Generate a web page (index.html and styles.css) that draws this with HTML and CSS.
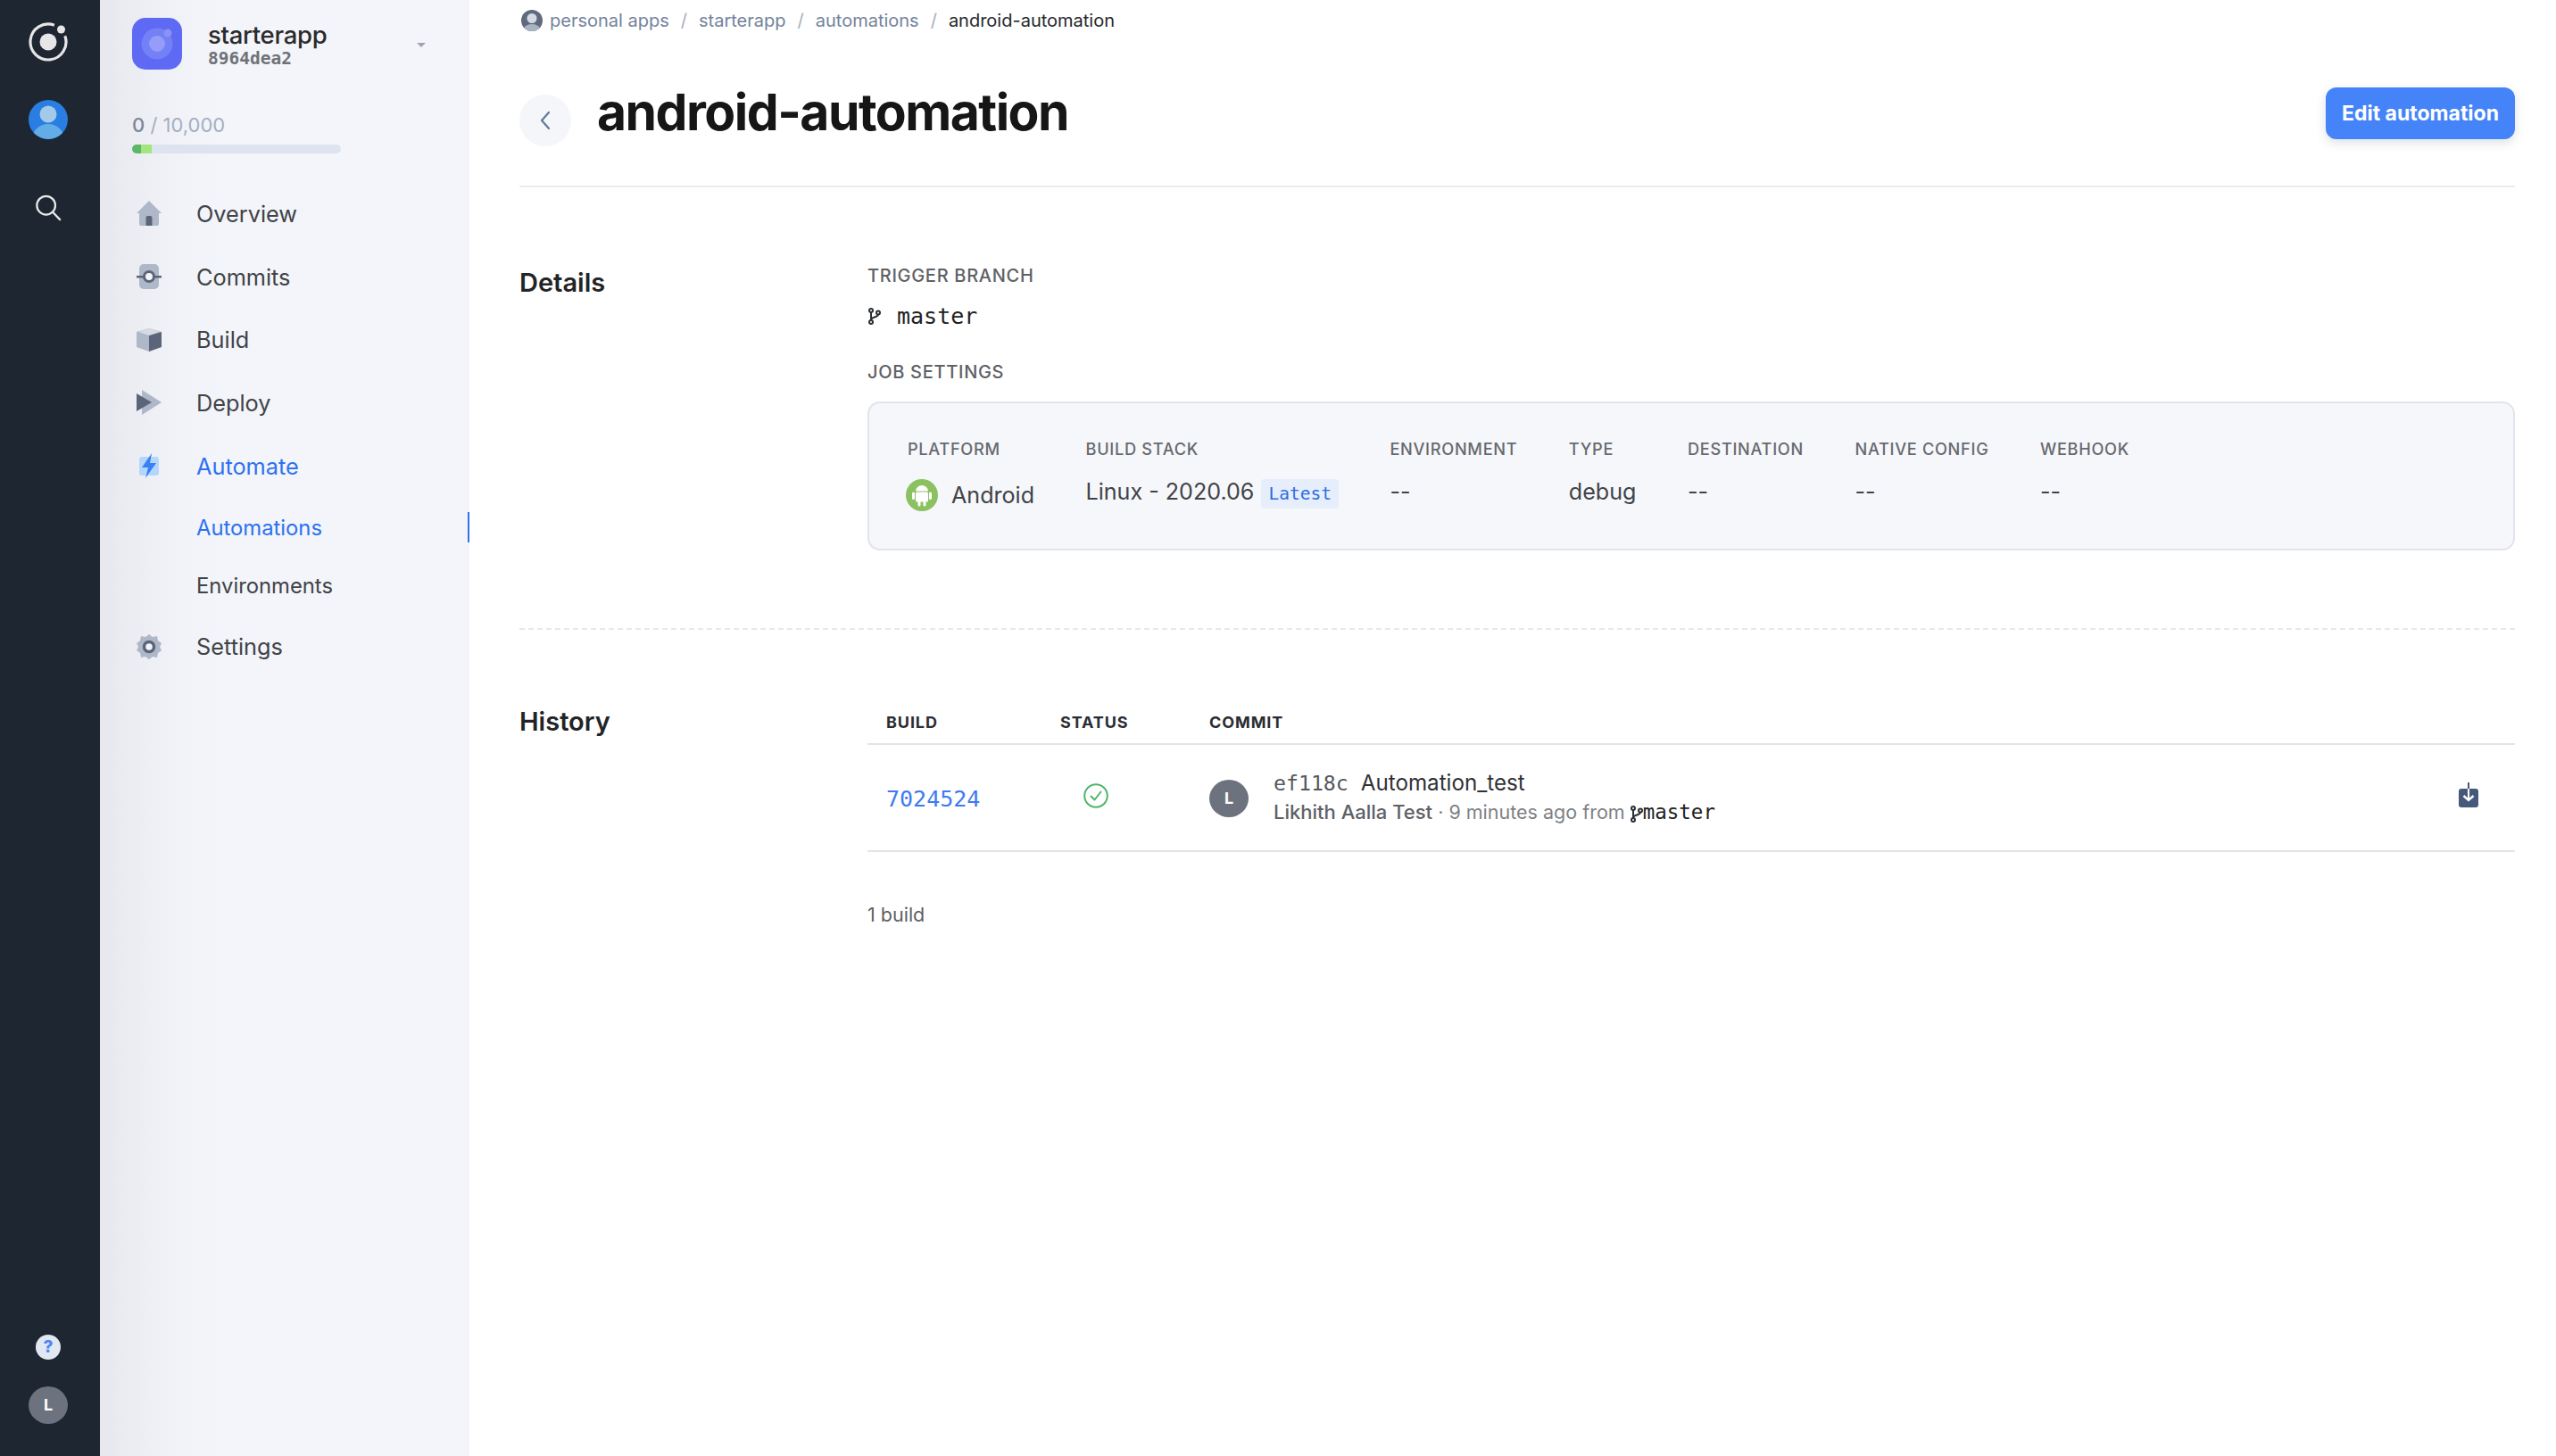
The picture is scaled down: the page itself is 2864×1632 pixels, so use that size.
FILE: index.html
```html
<!DOCTYPE html>
<html lang="en">
<head>
    <meta charset="UTF-8">
    <title>android-automation</title>
    <link rel="stylesheet" href="styles.css">
</head>
<body>
<div class="app">
    <aside class="rail">
        <svg class="rail-logo" width="46" height="46" viewBox="0 0 46 46">
            <path d="M41.8 16.200A20 20 0 1 1 29.840 4.200" fill="none" stroke="#e6e6e6" stroke-width="3.200"/>
            <circle cx="23" cy="23" r="9.500" fill="#e6e6e6"/>
            <circle cx="37.500" cy="9" r="4.500" fill="#e6e6e6"/>
        </svg>
        <svg class="rail-user" width="44" height="44" viewBox="0 0 44 44">
            <defs><clipPath id="railclip"><circle cx="22" cy="22" r="22"/></clipPath></defs>
            <circle cx="22" cy="22" r="22" fill="#2a7de1"/>
            <circle cx="22" cy="16" r="9.500" fill="#a3cbe9"/>
            <ellipse cx="22" cy="44" rx="18" ry="17" fill="#62ade8" clip-path="url(#railclip)"/>
        </svg>
        <svg class="rail-search" width="30" height="30" viewBox="0 0 32 32" fill="none" stroke="#e8e8e8" stroke-width="2.400" stroke-linecap="round">
            <circle cx="13.500" cy="13" r="11"/>
            <path d="M21.500 21l8.500 9"/>
        </svg>
        <div class="rail-spacer"></div>
        <span class="rail-help">?</span>
        <span class="rail-avatar">L</span>
    </aside>

    <nav class="sidebar">
        <div class="app-head">
            <svg width="56" height="58" viewBox="0 0 56 58">
                <rect width="56" height="58" rx="15" fill="#5e69f4"/>
                <circle cx="28" cy="29" r="17.500" fill="#7480f5"/>
                <circle cx="28" cy="29" r="9" fill="#959df8"/>
                <circle cx="40" cy="17" r="4.500" fill="#8a92f7"/>
            </svg>
            <div class="app-info">
                <div class="app-name">starterapp</div>
                <div class="app-id">8964dea2</div>
            </div>
            <span class="caret"></span>
        </div>
        <div class="usage"><b>0</b> / 10,000</div>
        <div class="usage-bar"><span class="usage-a"></span><span class="usage-b"></span></div>

        <a class="nav-item">
            <svg width="28" height="28" viewBox="0 0 28 28">
                <path d="M14 0L28 14h-3v12a2 2 0 0 1-2 2H5a2 2 0 0 1-2-2V14H0z" fill="#afb8c8"/>
                <path d="M10.500 28V19a2 2 0 0 1 2-2h3a2 2 0 0 1 2 2v9z" fill="#5c6479"/>
            </svg>
            Overview
        </a>
        <a class="nav-item">
            <svg width="28" height="28" viewBox="0 0 28 28">
                <rect x="3" width="22" height="28" rx="5" fill="#afb8c8"/>
                <path d="M0 13h28v2.500H0z" fill="#5c6479"/>
                <circle cx="14" cy="14" r="5.500" fill="#f3f5fa" stroke="#5c6479" stroke-width="3"/>
            </svg>
            Commits
        </a>
        <a class="nav-item">
            <svg width="28" height="28" viewBox="0 0 28 28">
                <path d="M14 1l14 4v16l-14 6-14-5V5z" fill="#afb8c8"/>
                <path d="M14 9l14-4v17l-14 5z" fill="#5c6479"/>
                <path d="M2 5l12-4 12 4-12 4z" fill="#d5dae3"/>
            </svg>
            Build
        </a>
        <a class="nav-item">
            <svg width="28" height="28" viewBox="0 0 28 28">
                <path d="M6 0l22 14L6 28z" fill="#afb8c8"/>
                <path d="M0 4l17 10L0 24z" fill="#5c6479"/>
            </svg>
            Deploy
        </a>
        <a class="nav-item active">
            <svg width="28" height="28" viewBox="0 0 28 28">
                <rect x="3" y="4" width="22" height="21" rx="3" fill="#b5d6fb"/>
                <path d="M17 0L6 16h7l-3 12 12-17h-7z" fill="#3880f6"/>
            </svg>
            Automate
        </a>
        <a class="sub-item active">Automations</a>
        <a class="sub-item">Environments</a>
        <a class="nav-item">
            <svg width="28" height="28" viewBox="0 0 28 28">
                <path d="M14 0l4 3 5-1 1 5 4 3-2 4 2 4-4 3-1 5-5-1-4 3-4-3-5 1-1-5-4-3 2-4-2-4 4-3 1-5 5 1z" fill="#afb8c8"/>
                <circle cx="14" cy="14" r="5.500" fill="#f3f5fa" stroke="#5c6479" stroke-width="3.500"/>
            </svg>
            Settings
        </a>
    </nav>

    <main class="main">
        <div class="crumbs">
            <svg width="24" height="24" viewBox="0 0 24 24">
                <defs><clipPath id="crumbclip"><circle cx="12" cy="12" r="12"/></clipPath></defs>
                <circle cx="12" cy="12" r="12" fill="#5f6a7d"/>
                <circle cx="12" cy="9.500" r="5.500" fill="#d5dae2"/>
                <ellipse cx="12" cy="24" rx="10" ry="8" fill="#aab3c2" clip-path="url(#crumbclip)"/>
            </svg>
            <a>personal apps</a><i>/</i><a>starterapp</a><i>/</i><a>automations</a><i>/</i><span>android-automation</span>
        </div>

        <header class="page-head">
            <span class="back">
                <svg width="14" height="24" viewBox="0 0 14 24" fill="none" stroke="#65789a" stroke-width="2.200" stroke-linecap="round" stroke-linejoin="round"><path d="M11 3L3 12l8 9"/></svg>
            </span>
            <h1>android-automation</h1>
            <button class="btn">Edit automation</button>
        </header>

        <section class="section details">
            <h2>Details</h2>
            <div class="section-body">
                <div class="field-label">TRIGGER BRANCH</div>
                <div class="branch">
                    <svg width="14" height="19" viewBox="0 0 14 19" fill="none" stroke="#2b3038" stroke-width="2"><circle cx="3" cy="3" r="2"/><circle cx="3" cy="16" r="2"/><circle cx="11" cy="5.500" r="2"/><path d="M3 5v9M3 13.500c0-3.500 8-2.500 8-6"/></svg>
                    master
                </div>
                <div class="field-label job-label">JOB SETTINGS</div>
                <div class="settings">
                    <div class="setting">
                        <div class="setting-label">PLATFORM</div>
                        <div class="setting-value android">
                            <svg width="36" height="36" viewBox="0 0 36 36">
                                <circle cx="18" cy="18" r="18" fill="#8cc162"/>
                                <path d="M11 13.500a7 6.500 0 0 1 14 0z" fill="#fff"/>
                                <rect x="11" y="14.500" width="14" height="11" rx="1.500" fill="#fff"/>
                                <rect x="7" y="14.500" width="3" height="8.500" rx="1.500" fill="#fff"/>
                                <rect x="26" y="14.500" width="3" height="8.500" rx="1.500" fill="#fff"/>
                                <rect x="13.500" y="24" width="3" height="6.500" rx="1.500" fill="#fff"/>
                                <rect x="19.500" y="24" width="3" height="6.500" rx="1.500" fill="#fff"/>
                            </svg>
                            Android
                        </div>
                    </div>
                    <div class="setting">
                        <div class="setting-label">BUILD STACK</div>
                        <div class="setting-value">Linux - 2020.06 <span class="badge">Latest</span></div>
                    </div>
                    <div class="setting">
                        <div class="setting-label">ENVIRONMENT</div>
                        <div class="setting-value">--</div>
                    </div>
                    <div class="setting">
                        <div class="setting-label">TYPE</div>
                        <div class="setting-value">debug</div>
                    </div>
                    <div class="setting">
                        <div class="setting-label">DESTINATION</div>
                        <div class="setting-value">--</div>
                    </div>
                    <div class="setting">
                        <div class="setting-label">NATIVE CONFIG</div>
                        <div class="setting-value">--</div>
                    </div>
                    <div class="setting">
                        <div class="setting-label">WEBHOOK</div>
                        <div class="setting-value">--</div>
                    </div>
                </div>
            </div>
        </section>

        <section class="section history">
            <h2>History</h2>
            <div class="section-body">
                <div class="table-head">
                    <span>BUILD</span><span>STATUS</span><span>COMMIT</span>
                </div>
                <div class="table-row">
                    <a class="build-num">7024524</a>
                    <svg class="status" width="28" height="28" viewBox="0 0 28 28" fill="none" stroke="#4fb56a" stroke-width="2"><circle cx="14" cy="14" r="12.800"/><path d="M8.500 14.500l4 4 7-9" stroke-linecap="round" stroke-linejoin="round"/></svg>
                    <div class="commit">
                        <span class="commit-avatar">L</span>
                        <div class="commit-text">
                            <div class="commit-title"><code>ef118c</code>Automation_test</div>
                            <div class="commit-meta"><b>Likhith Aalla Test</b> · 9 minutes ago from
                                <svg width="14" height="19" viewBox="0 0 14 19" fill="none" stroke="#2b3038" stroke-width="2"><circle cx="3" cy="3" r="2"/><circle cx="3" cy="16" r="2"/><circle cx="11" cy="5.500" r="2"/><path d="M3 5v9M3 13.500c0-3.500 8-2.500 8-6"/></svg><code>master</code></div>
                        </div>
                    </div>
                    <svg class="download" width="22" height="28" viewBox="0 0 22 28">
                        <rect y="7" width="22" height="21" rx="3" fill="#46597a"/>
                        <path d="M11 0v19" stroke="#46597a" stroke-width="2"/>
                        <path d="M11 7v12" stroke="#fff" stroke-width="2"/>
                        <path d="M5.500 15l5.500 5 5.500-5" fill="none" stroke="#fff" stroke-width="2.400"/>
                    </svg>
                </div>
                <div class="table-foot">1 build</div>
            </div>
        </section>
    </main>
</div>
</body>
</html>
```
FILE: styles.css
```css
html,body{
    margin:0;
    padding:0;
    height:100%;
    background:#fff;
    font-family:Inter,"Liberation Sans",sans-serif;
}
.app{
    display:flex;
    height:100vh;
    overflow:hidden;
}
code{
    font-family:"DejaVu Sans Mono","Liberation Mono",monospace;
}

/* left rail */
.rail{
    width:112px;
    flex:none;
    background:#1e2631;
    display:flex;
    flex-direction:column;
    align-items:center;
    padding:24px 4px 36px 0;
    box-sizing:border-box;
}
.rail-user{
    margin-top:42px;
}
.rail-search{
    margin-top:62px;
}
.rail-spacer{
    flex:1;
}
.rail-help{
    width:28px;
    height:28px;
    border-radius:50%;
    background:#e2e8f2;
    color:#4f86f7;
    font-size:19px;
    font-weight:800;
    line-height:28px;
    text-align:center;
}
.rail-avatar{
    width:44px;
    height:42px;
    margin-top:30px;
    border-radius:50%;
    background:#6c737e;
    color:#fff;
    font-size:18px;
    font-weight:700;
    line-height:42px;
    text-align:center;
}

/* sidebar */
.sidebar{
    width:414px;
    flex:none;
    box-sizing:border-box;
    padding:20px 0 0 36px;
    background:linear-gradient(to right,#e6e8ed 0,#eff1f6 70px,#f3f5fa 130px);
}
.app-head{
    display:flex;
    align-items:center;
    height:58px;
}
.app-info{
    margin-left:29px;
}
.app-name{
    font-size:27.500px;
    font-weight:500;
    line-height:32px;
    color:#2b2b2b;
    letter-spacing:-.3px;
    margin-top:1px;
}
.app-id{
    font-family:"DejaVu Sans Mono",monospace;
    font-size:19.500px;
    font-weight:700;
    line-height:21px;
    color:#6f7378;
}
.caret{
    margin:2px 0 0 101px;
    width:0;
    height:0;
    border-left:5px solid transparent;
    border-right:5px solid transparent;
    border-top:5px solid #a1a5ad;
}
.usage{
    margin-top:48px;
    font-size:22px;
    line-height:28px;
    color:#a4aebf;
}
.usage b{
    font-weight:500;
    color:#7c8698;
}
.usage-bar{
    display:flex;
    width:234px;
    height:10px;
    margin-top:8px;
    margin-bottom:32px;
    border-radius:5px;
    overflow:hidden;
    background:#dde3ef;
}
.usage-a{
    width:10px;
    background:#5cb868;
}
.usage-b{
    width:12px;
    background:#a3e57e;
}
.nav-item,.sub-item{
    display:flex;
    align-items:center;
    color:#414347;
    font-size:25.300px;
}
.nav-item{
    height:70.700px;
}
.nav-item svg{
    margin:0 39px 0 5px;
    flex:none;
}
.nav-item.active,.sub-item.active{
    color:#2d72f0;
}
.sub-item{
    height:65px;
    margin-left:72px;
    font-size:23.800px;
    position:relative;
}
.nav-item.active{
    margin-bottom:2px;
}
.sub-item.active::after{
    content:'';
    position:absolute;
    right:0;
    top:15px;
    width:2px;
    height:34px;
    background:#2d72f0;
}

/* main */
.main{
    flex:1;
    min-width:0;
    padding:0 46px 0 56px;
}
.crumbs{
    display:flex;
    align-items:center;
    height:46px;
    padding-left:2px;
    font-size:20px;
    color:#74839c;
}
.crumbs svg{
    margin-right:8px;
}
.crumbs i{
    font-style:normal;
    color:#a7aeb9;
    margin:0 13px;
}
.crumbs span{
    color:#26282c;
}
.page-head{
    display:flex;
    align-items:center;
    height:164px;
    box-sizing:border-box;
    border-bottom:2px solid #e9edf2;
}
.back{
    width:58px;
    height:58px;
    border-radius:50%;
    background:#f5f6fa;
    display:flex;
    align-items:center;
    justify-content:center;
    margin-top:16px;
}
.page-head h1{
    margin:-3px 0 0 29px;
    flex:1;
    font-size:57px;
    font-weight:700;
    letter-spacing:-1.500px;
    color:#161616;
}
.btn{
    width:212px;
    height:58px;
    border:0;
    border-radius:12px;
    background:#4584f8;
    color:#fff;
    font-family:inherit;
    font-size:23px;
    font-weight:700;
    box-shadow:0 4px 12px rgba(40,60,100,.16);
}

.section{
    display:flex;
}
.section h2{
    width:390px;
    flex:none;
    margin:0;
    font-size:29px;
    font-weight:600;
    color:#222427;
}
.section-body{
    flex:1;
    min-width:0;
}
.details{
    height:496px;
    box-sizing:border-box;
    padding-top:87px;
    border-bottom:2px dashed #e6e8ec;
}
.details h2{
    line-height:39px;
}
.field-label{
    font-size:20px;
    font-weight:500;
    letter-spacing:.7px;
    line-height:24px;
    color:#5e6166;
}
.branch{
    display:flex;
    align-items:center;
    height:42px;
    margin-top:12px;
    font-family:"DejaVu Sans Mono",monospace;
    font-size:25px;
    color:#222;
}
.branch svg{
    margin:0 18px 0 1px;
}
.job-label{
    margin-top:30px;
}
.settings{
    display:flex;
    gap:57.500px;
    height:167px;
    box-sizing:border-box;
    margin-top:21px;
    padding:39px 43px 0;
    background:#f6f7fb;
    border:2px solid #e2e4ec;
    border-radius:14px;
}
.setting-label{
    font-size:18.200px;
    font-weight:500;
    letter-spacing:.7px;
    line-height:24px;
    color:#66696e;
}
.setting-value{
    display:flex;
    align-items:center;
    gap:8px;
    height:36px;
    margin-top:18px;
    font-size:25.100px;
    color:#414347;
}
.android{
    gap:15px;
    margin-top:22px;
}
.android svg{
    margin-left:-2px;
}
.badge{
    margin-left:0;
    padding:0 8px;
    height:33px;
    line-height:33px;
    border-radius:4px;
    background:#e6eefc;
    font-family:"DejaVu Sans Mono",monospace;
    font-size:19.500px;
    color:#2d6de0;
    position:relative;
    top:2px;
}

/* history table */
.history{
    padding-top:83px;
}
.history h2{
    line-height:40px;
}
.table-head{
    display:grid;
    grid-template-columns:195px 167px 1fr;
    height:46px;
    padding:4px 0 0 21px;
    box-sizing:border-box;
    border-bottom:2px solid #e1e5e9;
    font-size:18px;
    font-weight:700;
    letter-spacing:.9px;
    line-height:34px;
    color:#2b2d31;
}
.table-row{
    display:grid;
    grid-template-columns:195px 167px 1fr auto;
    align-items:center;
    height:120px;
    box-sizing:border-box;
    padding:0 41px 0 21px;
    border-bottom:2px solid #e1e5e9;
}
.build-num{
    font-family:"DejaVu Sans Mono",monospace;
    font-size:25px;
    color:#3e7bf1;
    margin-top:2px;
}
.status{
    margin:-5px 0 0 26px;
}
.commit{
    display:flex;
    align-items:center;
}
.commit-avatar{
    width:44px;
    height:42px;
    margin-top:1px;
    border-radius:50%;
    background:#6c737e;
    color:#fff;
    font-size:18px;
    font-weight:700;
    line-height:42px;
    text-align:center;
    flex:none;
}
.commit-text{
    margin-left:28px;
    padding-top:1px;
}
.commit-title{
    font-size:24.200px;
    line-height:30px;
    color:#2f3135;
}
.commit-title code{
    font-size:23.200px;
    color:#55585d;
    margin-right:14px;
}
.commit-meta{
    font-size:21.500px;
    line-height:34px;
    color:#7e8186;
    white-space:nowrap;
}
.commit-meta b{
    font-size:22px;
    font-weight:500;
    color:#5e6166;
}
.commit-meta svg{
    vertical-align:-4px;
}
.commit-meta code{
    font-size:22.500px;
    color:#222;
}
.download{
    margin-bottom:7px;
}
.table-foot{
    margin-top:56px;
    font-size:21.500px;
    line-height:28px;
    color:#5d6065;
}
```
